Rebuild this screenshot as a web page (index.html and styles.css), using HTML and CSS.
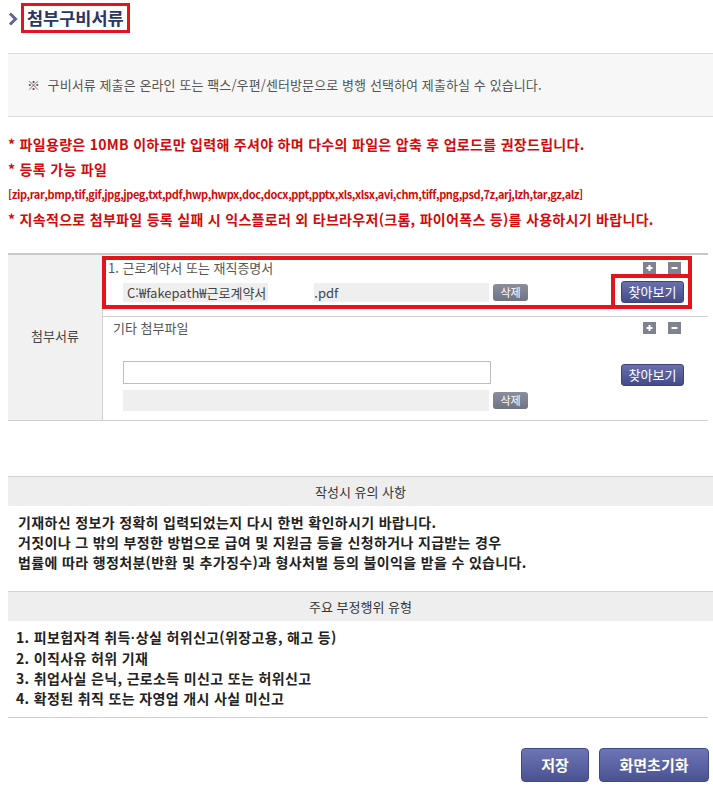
FILE: index.html
```html
<!DOCTYPE html>
<html lang="ko">
<head>
<meta charset="utf-8">
<title>첨부구비서류</title>
<link rel="stylesheet" href="styles.css">
</head>
<body>
<div class="page">
  <h2 class="title">
    <svg class="title-arrow" viewBox="0 0 10 14" aria-hidden="true"><polyline points="2,1.5 7.5,7 2,12.5" fill="none" stroke="#5f6492" stroke-width="3"/></svg>
    <span class="title-text">첨부구비서류</span>
  </h2>

  <div class="notice">※&nbsp; 구비서류 제출은 온라인 또는 팩스/우편/센터방문으로 병행 선택하여 제출하실 수 있습니다.</div>

  <ul class="warn">
    <li>* 파일용량은 10MB 이하로만 입력해 주셔야 하며 다수의 파일은 압축 후 업로드를 권장드립니다.</li>
    <li>* 등록 가능 파일</li>
    <li class="warn-list">[zip,rar,bmp,tif,gif,jpg,jpeg,txt,pdf,hwp,hwpx,doc,docx,ppt,pptx,xls,xlsx,avi,chm,tiff,png,psd,7z,arj,lzh,tar,gz,alz]</li>
    <li>* 지속적으로 첨부파일 등록 실패 시 익스플로러 외 타브라우저(크롬, 파이어폭스 등)를 사용하시기 바랍니다.</li>
  </ul>

  <div class="attach">
    <div class="attach-label">첨부서류</div>

    <div class="attach-row row-one">
      <div class="row-head">
        <span class="row-title">1. 근로계약서 또는 재직증명서</span>
        <span class="pm">
          <span class="pm-btn"><svg viewBox="0 0 13 12"><path d="M3.5 6h6M6.5 3v6" stroke="#fff" stroke-width="2"/></svg></span>
          <span class="pm-btn"><svg viewBox="0 0 13 12"><path d="M3.5 6h6" stroke="#fff" stroke-width="2"/></svg></span>
        </span>
      </div>
      <div class="row-body">
        <div class="file-line">
          <span class="file-field">C:₩fakepath₩근로계약서<span class="mask"></span>.pdf</span>
          <span class="del-btn">삭제</span>
        </div>
        <span class="find-btn">찾아보기</span>
      </div>
      <span class="mark mark-row"></span>
      <span class="mark mark-btn"></span>
    </div>

    <div class="attach-row row-two">
      <div class="row-head">
        <span class="row-title other">기타 첨부파일</span>
        <span class="pm">
          <span class="pm-btn"><svg viewBox="0 0 13 12"><path d="M3.5 6h6M6.5 3v6" stroke="#fff" stroke-width="2"/></svg></span>
          <span class="pm-btn"><svg viewBox="0 0 13 12"><path d="M3.5 6h6" stroke="#fff" stroke-width="2"/></svg></span>
        </span>
      </div>
      <div class="row-body top">
        <div class="file-stack">
          <span class="file-input"></span>
          <div class="file-line">
            <span class="file-field tall"></span>
            <span class="del-btn">삭제</span>
          </div>
        </div>
        <span class="find-btn shifted">찾아보기</span>
      </div>
    </div>
  </div>

  <div class="section first">
    <div class="section-head">작성시 유의 사항</div>
    <div class="section-body">
      <p>기재하신 정보가 정확히 입력되었는지 다시 한번 확인하시기 바랍니다.</p>
      <p>거짓이나 그 밖의 부정한 방법으로 급여 및 지원금 등을 신청하거나 지급받는 경우</p>
      <p>법률에 따라 행정처분(반환 및 추가징수)과 형사처벌 등의 불이익을 받을 수 있습니다.</p>
    </div>
  </div>

  <div class="section second">
    <div class="section-head">주요 부정행위 유형</div>
    <div class="section-body">
      <p>1. 피보험자격 취득<span class="dot">·</span>상실 허위신고(위장고용, 해고 등)</p>
      <p>2. 이직사유 허위 기재</p>
      <p>3. 취업사실 은닉, 근로소득 미신고 또는 허위신고</p>
      <p>4. 확정된 취직 또는 자영업 개시 사실 미신고</p>
    </div>
  </div>

  <div class="actions">
    <span class="big-btn save">저장</span>
    <span class="big-btn reset">화면초기화</span>
  </div>
</div>
</body>
</html>
```

FILE: styles.css
```css
* { box-sizing: border-box; }
html, body { margin: 0; padding: 0; overflow: hidden; background: #fff; }
body { font-family: "Noto Sans CJK KR", "Noto Sans", sans-serif; color: #333; }

.page { padding: 3px 0 0 8px; width: 713px; }

.title { display: flex; align-items: center; margin: 0; height: 30px; }
.title-arrow { width: 10px; height: 14px; margin: 2px 3px 0 0; }
.title-text {
  border: 3px solid #e3141c; height: 30px; padding: 0 3px;
  font-size: 17.5px; font-weight: bold; line-height: 23px; color: #2c3660;
}

.notice {
  margin-top: 20px; width: 705px; height: 64px;
  border-top: 1px solid #dcdcdc; border-bottom: 1px solid #dcdcdc;
  background: #f7f7f7; padding-left: 19px;
  font-size: 13px; line-height: 62px; color: #555; letter-spacing: 0.1px;
}

.warn { list-style: none; margin: 15px 0 0; padding: 0; }
.warn li { font-size: 14px; font-weight: bold; line-height: 25px; color: #d20a0a; letter-spacing: 0.3px; }
.warn li.warn-list { font-size: 11px; letter-spacing: -0.4px; }

.attach {
  margin-top: 21px; width: 700px;
  display: grid; grid-template-columns: 95px 1fr;
  border-top: 2px solid #c8c8c8; border-bottom: 1px solid #cfcfcf;
}
.attach-label {
  grid-row: span 2; background: #f1f1f1; border-right: 1px solid #d0d0d0;
  display: flex; align-items: center; justify-content: center;
  font-size: 13px; color: #444; padding-bottom: 4px;
}
.attach-row { position: relative; padding: 0 24px 0 0; }
.row-one { height: 62px; border-bottom: 1px solid #cfcfcf; padding-top: 6px; }
.row-two { height: 103px; padding-top: 4px; }

.row-head { display: flex; justify-content: space-between; align-items: center; height: 14px; padding-right: 3px; }
.row-title { font-size: 13px; line-height: 14px; color: #555; padding-left: 5px; }
.row-title.other { padding-left: 10px; }
.pm { display: flex; gap: 12px; }
.pm-btn { width: 13px; height: 12px; background: #7f828f; display: block; }
.pm-btn svg { display: block; width: 13px; height: 12px; }

.row-body { display: flex; align-items: center; justify-content: space-between; padding-left: 20px; margin-top: 6px; height: 22px; }
.row-body.top { align-items: flex-start; margin-top: 26px; height: auto; }

.file-line { display: flex; align-items: center; gap: 4px; }
.file-field {
  width: 366px; height: 19px; background: #efefef;
  font-size: 13px; line-height: 19px; color: #444; padding-left: 4px;
  display: flex; align-items: center; white-space: nowrap;
}
.file-field.tall { height: 21px; }
.mask { display: inline-block; width: 46px; height: 19px; background: #fff; margin-left: 2px; }
.file-stack { display: flex; flex-direction: column; gap: 6px; }
.file-input { width: 368px; height: 23px; border: 1px solid #bdbdbd; background: #fff; display: block; }

.del-btn {
  width: 35px; height: 17px; border-radius: 3px;
  background: linear-gradient(#8a8e9c, #6f7383);
  color: #fff; font-size: 11px; line-height: 17px; text-align: center;
}
.find-btn {
  width: 63px; height: 22px; border-radius: 3px;
  background: linear-gradient(#6970ad, #434b89);
  border: 1px solid #3c437b;
  color: #fff; font-size: 13px; line-height: 20px; text-align: center;
}
.find-btn.shifted { margin-top: 3px; }

.mark { position: absolute; border: 4px solid #e3141c; pointer-events: none; }
.mark-row { left: -1px; top: 1px; width: 590px; height: 53px; }
.mark-btn { left: 508px; top: 19px; width: 81px; height: 35px; }

.section { width: 705px; }
.section.first { margin-top: 55px; }
.section.second { margin-top: 19px; border-bottom: 1px solid #cfcfcf; width: 700px; }
.section-head {
  height: 30px; border-top: 1px solid #d2d2d2; background: #eeeeee;
  text-align: center; font-size: 13px; line-height: 29px; color: #333; width: 705px;
}
.section-body { padding: 6px 0 0 10px; }
.section.second .section-body { padding: 6px 0 9px 8px; }
.section-body p { margin: 0; font-size: 14px; font-weight: bold; line-height: 20px; color: #222; letter-spacing: 0.35px; }
.dot { font-family: "Liberation Sans", sans-serif; }

.actions { margin-top: 30px; width: 701px; display: flex; justify-content: flex-end; gap: 10px; }
.big-btn {
  height: 34px; border-radius: 4px;
  background: linear-gradient(#6d75b4, #4a5291);
  border: 1px solid #414985;
  color: #fff; font-size: 15px; font-weight: bold; line-height: 32px; text-align: center;
}
.big-btn.save { width: 68px; }
.big-btn.reset { width: 110px; }
```
